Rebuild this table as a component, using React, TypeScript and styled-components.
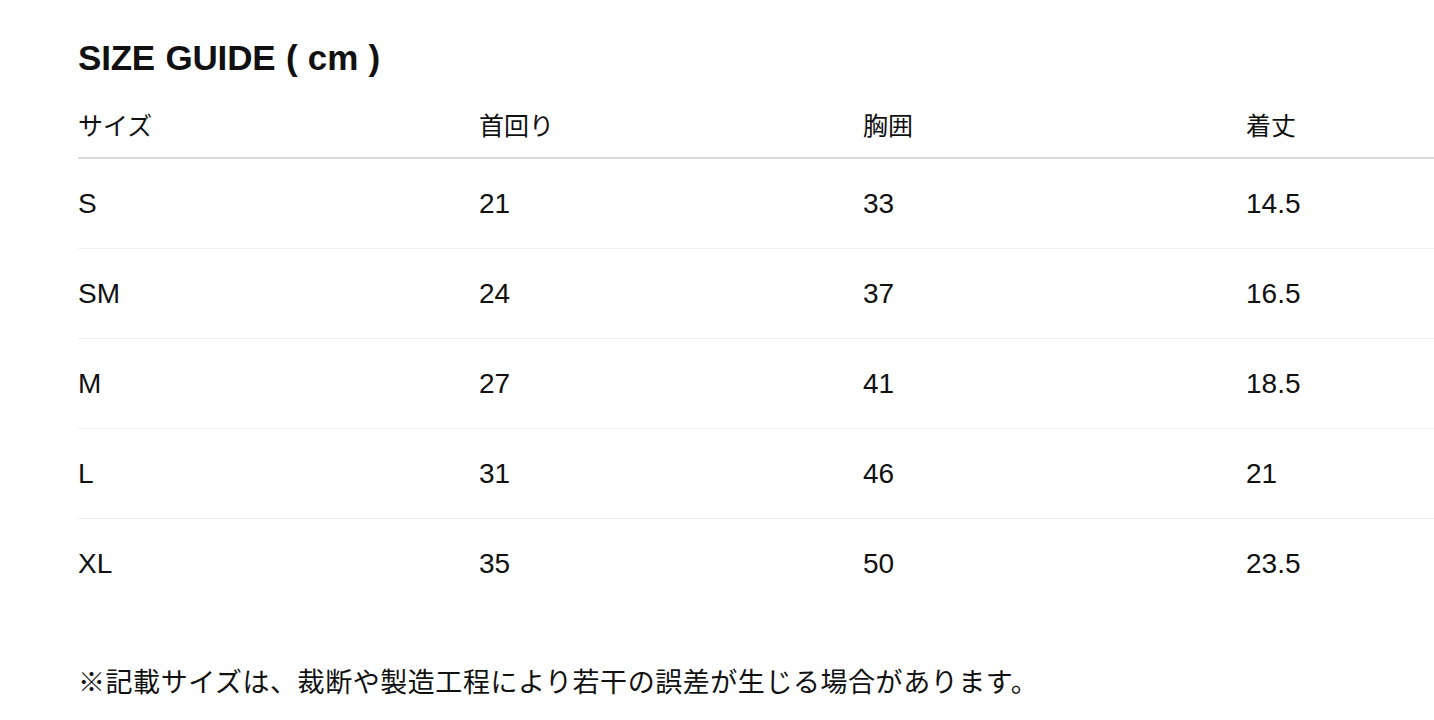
import styled, { createGlobalStyle } from 'styled-components'

const GlobalStyle = createGlobalStyle`
  body {
    margin: 0;
    background: #ffffff;
    color: #111111;
    font-family: 'Liberation Sans', Arial, 'Noto Sans CJK JP', sans-serif;
  }
`

const SPage = styled.div`
  padding: 38px 0 0 78px;
  overflow: hidden;
`

const STitle = styled.h2`
  margin: 0;
  font-size: 35px;
  line-height: 40px;
  font-weight: 700;
  letter-spacing: -0.2px;
  word-spacing: 1px;
`

const STable = styled.table`
  width: 1356px;
  border-collapse: collapse;
  table-layout: fixed;
`

const SHeadCell = styled.th<{ $width?: number }>`
  width: ${(p) => (p.$width ? `${p.$width}px` : 'auto')};
  padding: 33px 0 16px;
  line-height: 30px;
  font-size: 25px;
  font-weight: 400;
  text-align: left;
  border-bottom: 2px solid #d9d9d9;
`

const SRow = styled.tr`
  border-bottom: 1px solid #eeeeee;
  &:last-child {
    border-bottom: none;
  }
`

const SCell = styled.td`
  padding: 30px 0 29px;
  line-height: 30px;
  font-size: 28px;
`

const SNote = styled.p`
  margin: 60px 0 0;
  font-size: 27px;
  line-height: 30px;
  letter-spacing: 0.55px;
`

const columns = [
  { label: 'サイズ', width: 401 },
  { label: '首回り', width: 384 },
  { label: '胸囲', width: 383 },
  { label: '着丈' },
]

const rows = [
  ['S', '21', '33', '14.5'],
  ['SM', '24', '37', '16.5'],
  ['M', '27', '41', '18.5'],
  ['L', '31', '46', '21'],
  ['XL', '35', '50', '23.5'],
]

export default function App() {
  return (
    <>
      <GlobalStyle />
      <SPage>
        <STitle>SIZE GUIDE ( cm )</STitle>
        <STable>
          <thead>
            <tr>
              {columns.map((c) => (
                <SHeadCell key={c.label} $width={c.width}>
                  {c.label}
                </SHeadCell>
              ))}
            </tr>
          </thead>
          <tbody>
            {rows.map((r) => (
              <SRow key={r[0]}>
                {r.map((v, i) => (
                  <SCell key={i}>{v}</SCell>
                ))}
              </SRow>
            ))}
          </tbody>
        </STable>
        <SNote>※記載サイズは、裁断や製造工程により若干の誤差が生じる場合があります。</SNote>
      </SPage>
    </>
  )
}
